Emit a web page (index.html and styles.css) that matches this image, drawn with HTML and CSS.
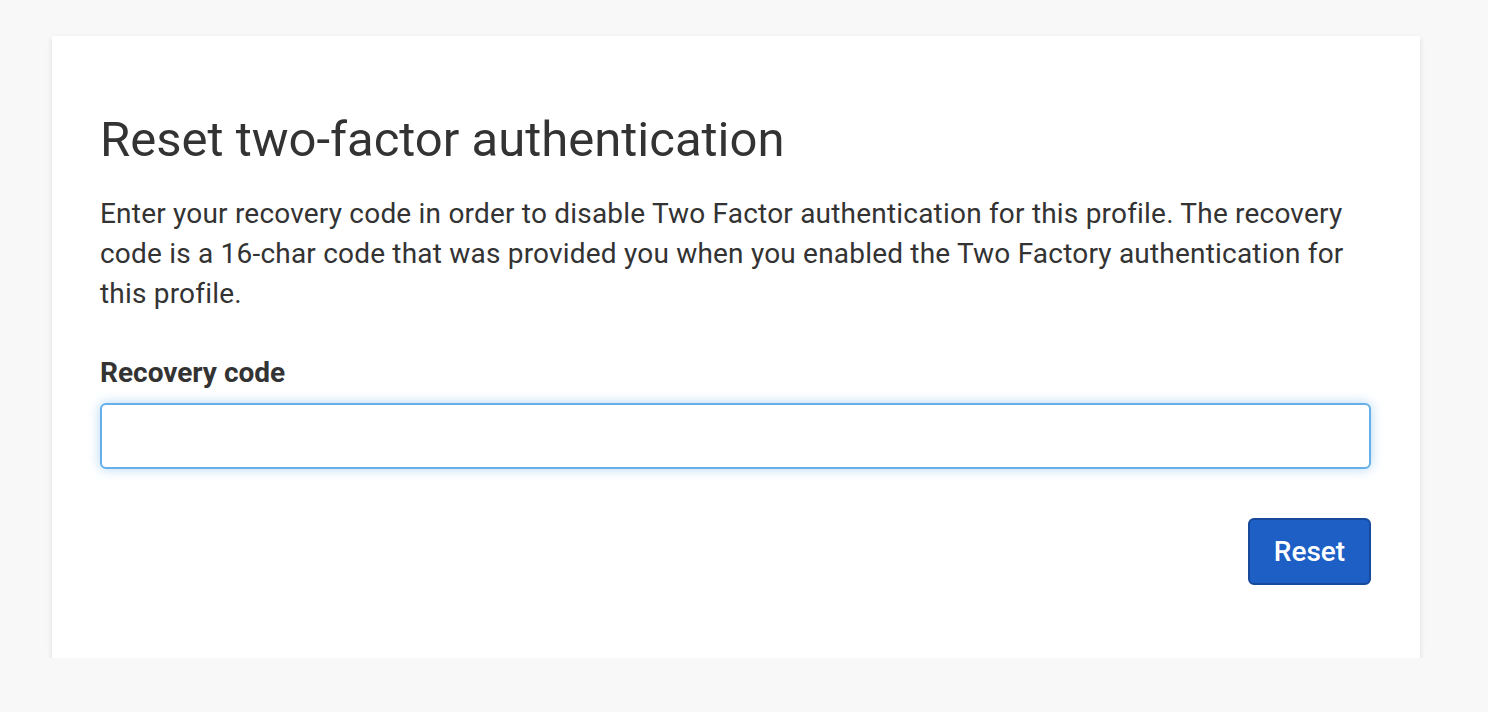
FILE: index.html
```html
<!DOCTYPE html>
<html>
<head>
<meta charset="utf-8">
<link rel="stylesheet" href="styles.css">
</head>
<body>
<div class="page">
  <div class="card">
    <h1 class="title">Reset two-factor authentication</h1>
    <p class="desc">Enter your recovery code in order to disable Two Factor authentication for this profile. The recovery code is a 16-char code that was provided you when you enabled the Two Factory authentication for this profile.</p>
    <label class="label" for="code">Recovery code</label>
    <input class="input" id="code" type="text">
    <div class="actions">
      <button class="btn">Reset</button>
    </div>
  </div>
</div>
</body>
</html>
```
FILE: styles.css
```css
html, body {
  margin: 0;
  padding: 0;
  background: #f8f8f8;
  font-family: Roboto, "Liberation Sans", sans-serif;
  color: #333;
}
.page {
  padding: 36px 68px 0 52px;
}
.card {
  background: #fff;
  box-shadow: 0 2px 6px rgba(0,0,0,0.10);
  padding: 76px 49px 73px 48px;
  display: flex;
  flex-direction: column;
}
.title {
  margin: 0;
  font-size: 49px;
  font-weight: 400;
  line-height: 56px;
  color: #333;
}
.desc {
  margin: 26px 0 0;
  font-size: 28px;
  line-height: 40px;
  letter-spacing: 0.2px;
  color: #333;
}
.label {
  margin-top: 42px;
  font-size: 28px;
  font-weight: 700;
  line-height: 34px;
}
.input {
  margin-top: 13px;
  height: 66px;
  box-sizing: border-box;
  border: 2px solid #66afe9;
  border-radius: 6px;
  box-shadow: 0 0 12px rgba(102,175,233,0.5);
  outline: none;
  font-size: 28px;
  padding: 0 16px;
}
.actions {
  display: flex;
  justify-content: flex-end;
  margin-top: 49px;
}
.btn {
  width: 123px;
  height: 67px;
  background: #1d5fc5;
  border: 2px solid #174a9c;
  border-radius: 6px;
  color: #fff;
  font-family: Roboto, "Liberation Sans", sans-serif;
  font-size: 28px;
  font-weight: 500;
  padding: 0;
}
```
